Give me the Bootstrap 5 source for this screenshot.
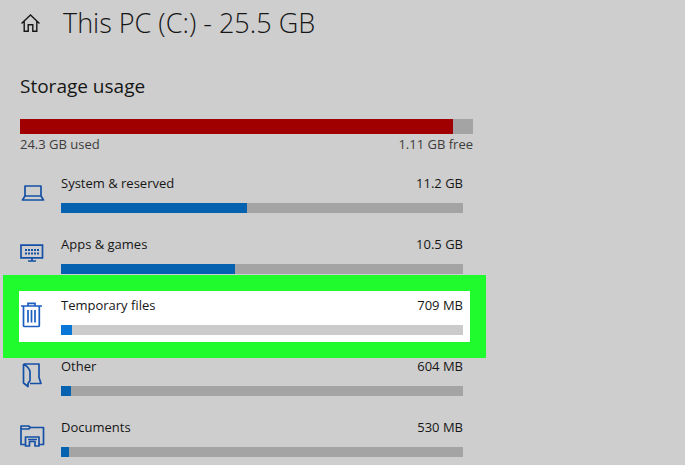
<!DOCTYPE html>
<html lang="en">
<head>
<meta charset="utf-8">
<meta name="viewport" content="width=device-width, initial-scale=1">
<title>Storage usage</title>
<link href="https://cdn.jsdelivr.net/npm/bootstrap@5.3.0/dist/css/bootstrap.min.css" rel="stylesheet">
<style>
  body { background: #cecece; color: #161616; font-family: "Open Sans", "Noto Sans", sans-serif; font-size: 13px; line-height: 20px; overflow: hidden; }
  .storage-page { max-width: 493px; padding: 0 20px; }
  .page-title { font-size: 27px; font-weight: 300; line-height: 46px; }
  .section-title { font-size: 19px; line-height: 26px; margin: 27px 0 20px; }
  .home-link { width: 43px; color: #161616; line-height: 0; }
  .progress { --bs-progress-height: 10px; --bs-progress-bg: #a4a4a4; --bs-progress-border-radius: 0; --bs-progress-bar-bg: #0562b1; }
  .drive-bar { --bs-progress-height: 15px; --bs-progress-bar-bg: #a00000; }
  .drive-totals { color: #3c3c3c; margin-bottom: 19px; }
  .usage-list { padding-right: 10px; }
  .usage-row { height: 61px; }
  .usage-icon { width: 41px; color: #1450a5; }
  .usage-icon svg { display: block; margin-top: 7px; }
  .usage-row .progress { margin-top: 10px; }
  .picked { z-index: 0; }
  .picked::before { content: ""; position: absolute; z-index: -1; top: -20px; left: -17px; right: -23px; height: 83px; background: #fff; border: 16px solid #1ffb2d; }
  .picked .progress { --bs-progress-bg: #cbcbcb; --bs-progress-bar-bg: #0877d5; }
  .picked .usage-icon { color: #1a5fc0; }
</style>
</head>
<body>
<main class="storage-page">
  <header class="d-flex align-items-center">
    <a class="home-link" href="#" aria-label="Home"><svg width="20" height="20" viewBox="0 0 20 20" fill="none" stroke="currentColor" stroke-width="1.4"><path d="M1.5 10.5 10.5 2l9 8.500M4.200 8.500V18.300h4v-6.500h4.600v6.500h4V8.500"/></svg></a>
    <h1 class="page-title mb-0">This PC (C:) - 25.5 GB</h1>
  </header>
  <h2 class="section-title fw-normal">Storage usage</h2>
  <div class="progress drive-bar" role="progressbar" aria-label="Drive space used" aria-valuenow="96" aria-valuemin="0" aria-valuemax="100"><div class="progress-bar" style="width:95.6%"></div></div>
  <div class="drive-totals d-flex justify-content-between"><span>24.3 GB used</span><span>1.11 GB free</span></div>

  <ul class="usage-list list-unstyled mb-0">
    <li class="usage-row d-flex">
      <div class="usage-icon flex-shrink-0"><svg width="26" height="26" viewBox="0 0 26 26" fill="none" stroke="currentColor" stroke-width="1.700"><path d="M5 16V6h16v10M5 16h16l2.500 4H2.500z" stroke-linejoin="round"/></svg></div>
      <div class="flex-grow-1"><div class="d-flex justify-content-between"><span>System &amp; reserved</span><span>11.2 GB</span></div>
      <div class="progress" role="progressbar" aria-label="System &amp; reserved" aria-valuenow="46" aria-valuemin="0" aria-valuemax="100"><div class="progress-bar" style="width:46.3%"></div></div></div>
    </li>
    <li class="usage-row d-flex">
      <div class="usage-icon flex-shrink-0"><svg width="26" height="26" viewBox="0 0 26 26" fill="none" stroke="currentColor" stroke-width="1.700"><path d="M1 4.200h21.500v12.600H1zM12 16.800v3M8 20h8"/><path d="M5 9h14M5 12.500h14" stroke-width="2" stroke-dasharray="2 1"/></svg></div>
      <div class="flex-grow-1"><div class="d-flex justify-content-between"><span>Apps &amp; games</span><span>10.5 GB</span></div>
      <div class="progress" role="progressbar" aria-label="Apps &amp; games" aria-valuenow="43" aria-valuemin="0" aria-valuemax="100"><div class="progress-bar" style="width:43.3%"></div></div></div>
    </li>
    <li class="usage-row d-flex position-relative picked">
      <div class="usage-icon flex-shrink-0"><svg width="26" height="26" viewBox="0 0 26 26" fill="none" stroke="currentColor" stroke-width="1.700"><path d="M1 4h21M8 4V1.300h7V4M3.500 4v19.500q0 1 1 1h13.800q1 0 1-1V4M8 8v12.500M11.500 8v12.500M15 8v12.500"/></svg></div>
      <div class="flex-grow-1"><div class="d-flex justify-content-between"><span>Temporary files</span><span>709 MB</span></div>
      <div class="progress" role="progressbar" aria-label="Temporary files" aria-valuenow="3" aria-valuemin="0" aria-valuemax="100"><div class="progress-bar" style="width:2.700%"></div></div></div>
    </li>
    <li class="usage-row d-flex">
      <div class="usage-icon flex-shrink-0"><svg width="26" height="26" viewBox="0 0 26 26" fill="none" stroke="currentColor" stroke-width="1.700" stroke-linejoin="round"><path d="M3.500 1H19v13.500L21 20.500H10M3.500 1v19l4.500 3.500V20.500l2-3V9Q9.500 4.500 3.500 1"/></svg></div>
      <div class="flex-grow-1"><div class="d-flex justify-content-between"><span>Other</span><span>604 MB</span></div>
      <div class="progress" role="progressbar" aria-label="Other" aria-valuenow="2" aria-valuemin="0" aria-valuemax="100"><div class="progress-bar" style="width:2.400%"></div></div></div>
    </li>
    <li class="usage-row d-flex">
      <div class="usage-icon flex-shrink-0"><svg width="26" height="26" viewBox="0 0 26 26" fill="none" stroke="currentColor" stroke-width="1.700" stroke-linejoin="round"><path d="M5.500 20.500H1V2h7.500l2 1.500H23.500v17H19M1 5h7.500l2-1.500M5.500 22v-9h13.500v9h-4V17.500H9.500V22zM8 15.500h9"/></svg></div>
      <div class="flex-grow-1"><div class="d-flex justify-content-between"><span>Documents</span><span>530 MB</span></div>
      <div class="progress" role="progressbar" aria-label="Documents" aria-valuenow="2" aria-valuemin="0" aria-valuemax="100"><div class="progress-bar" style="width:2.100%"></div></div></div>
    </li>
  </ul>
</main>
<script src="https://cdn.jsdelivr.net/npm/bootstrap@5.3.0/dist/js/bootstrap.bundle.min.js"></script>
</body>
</html>
